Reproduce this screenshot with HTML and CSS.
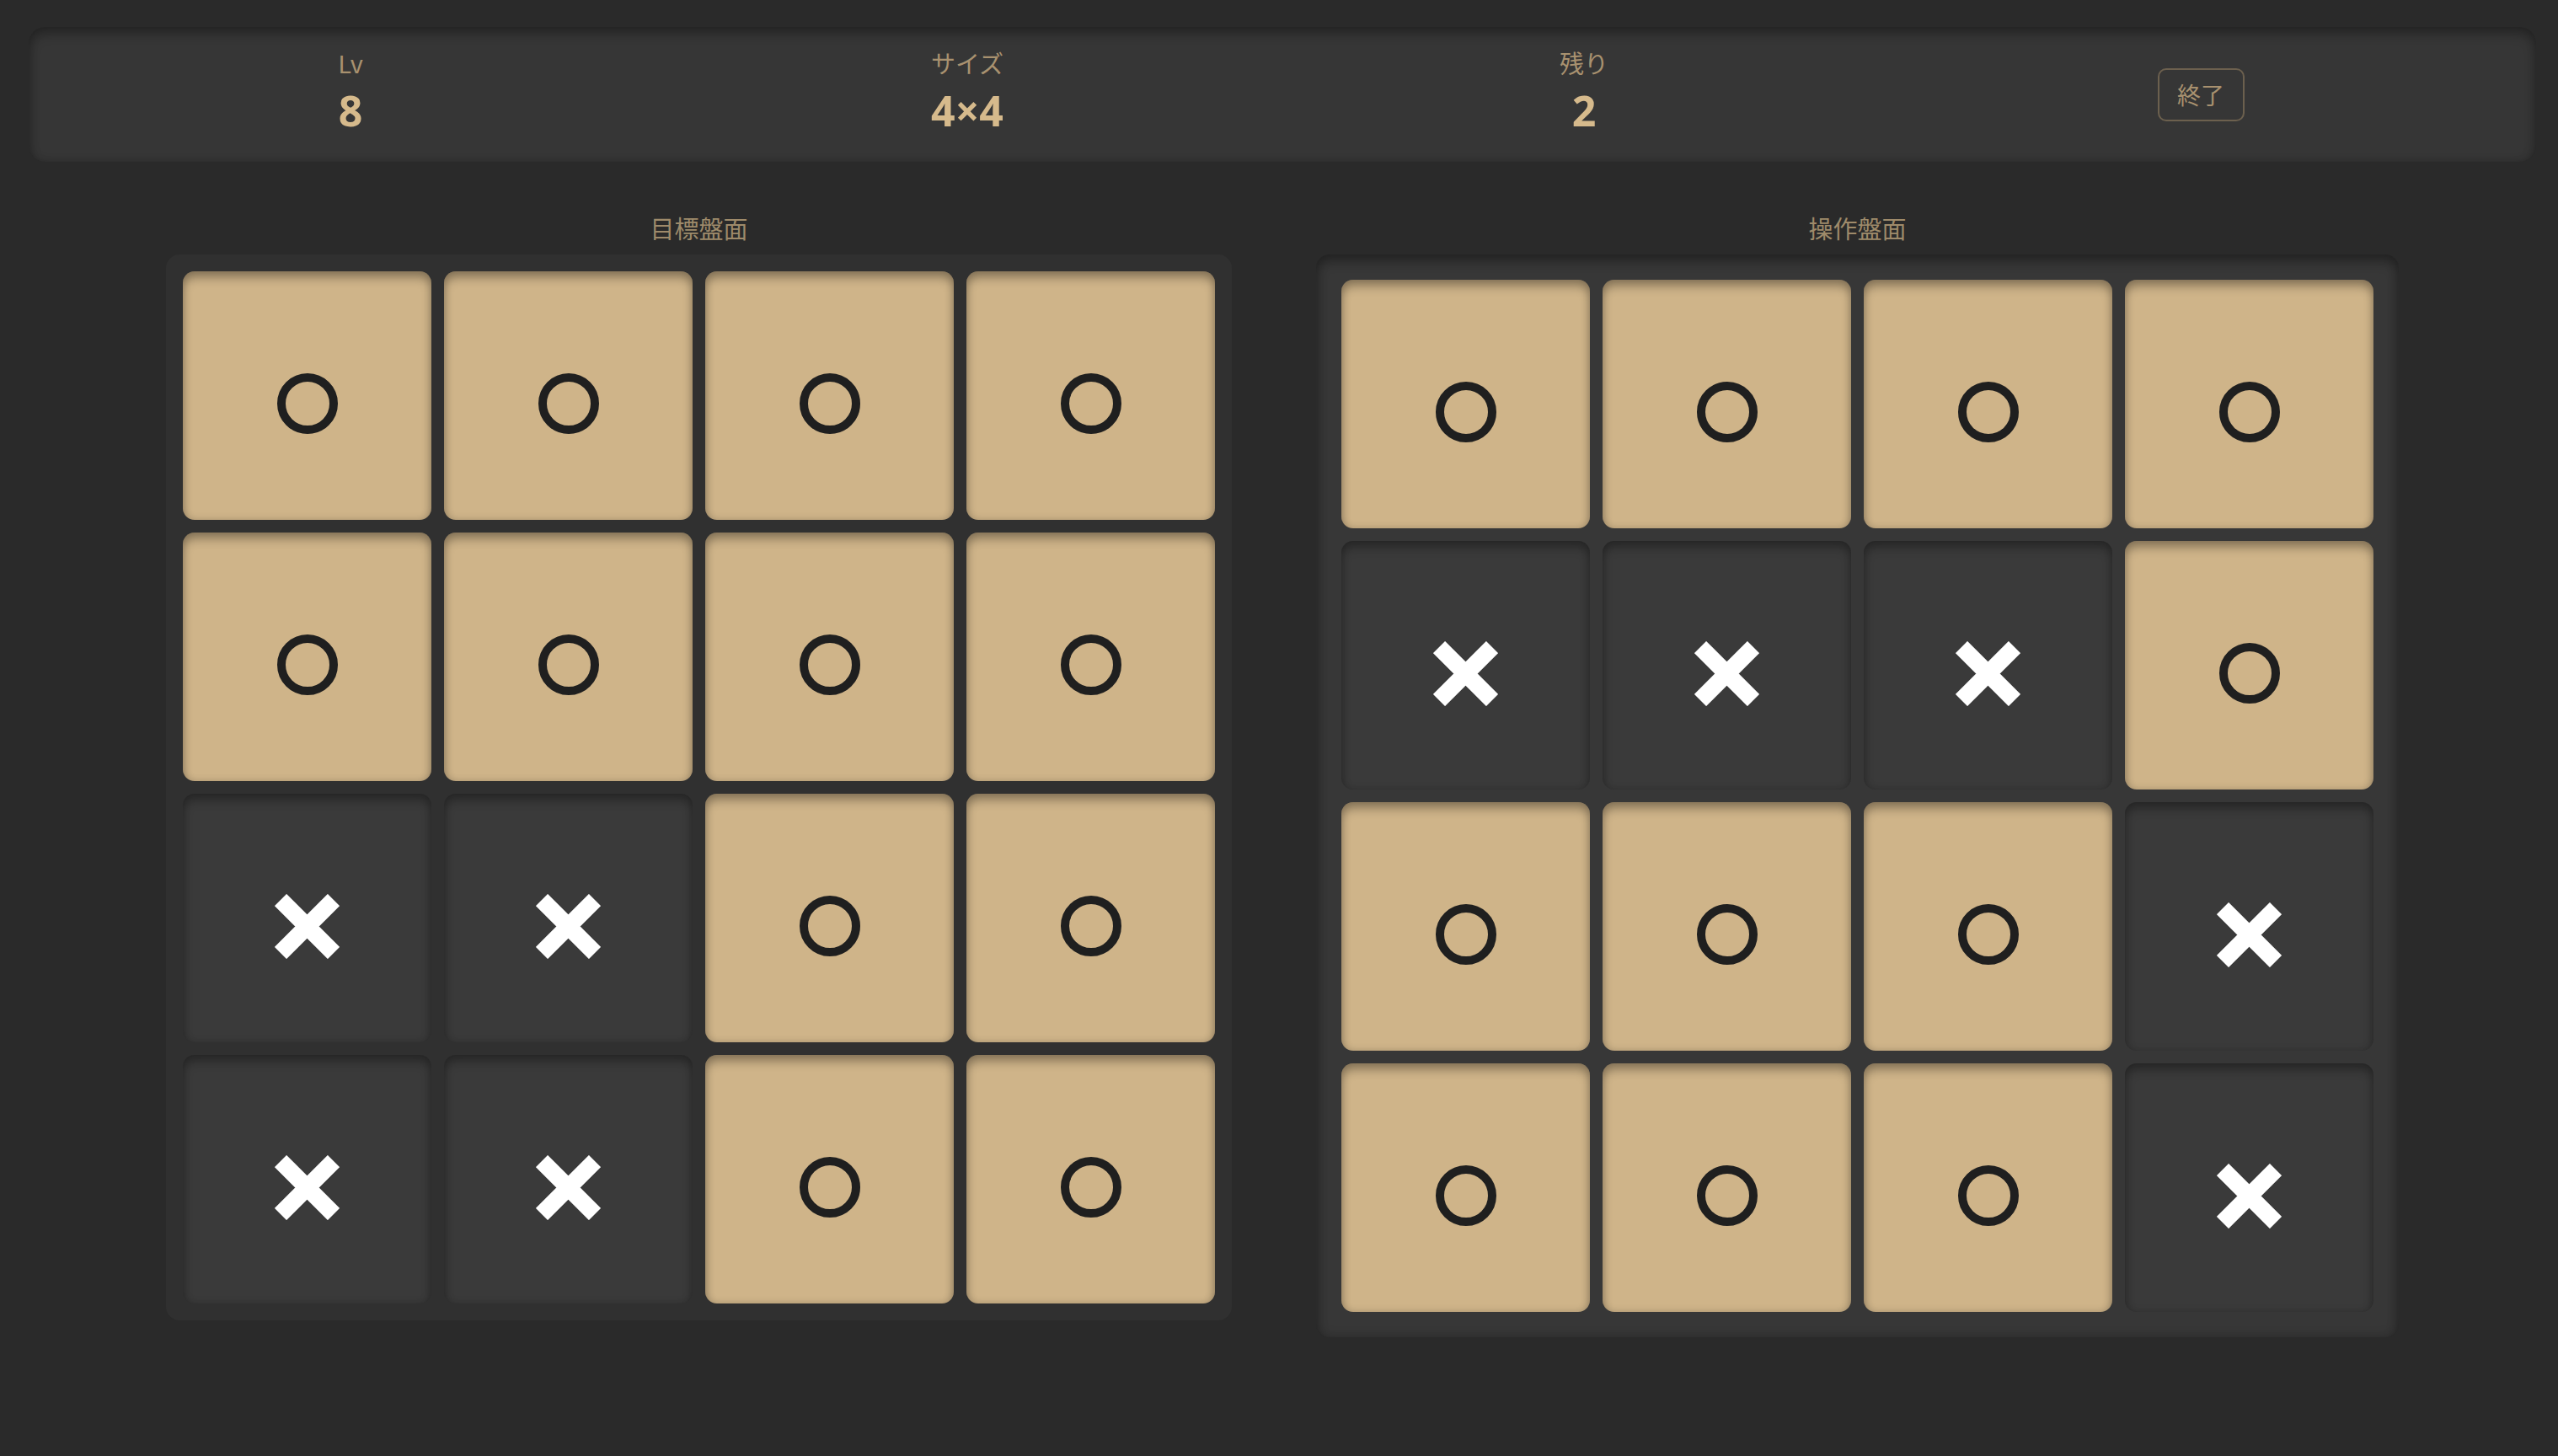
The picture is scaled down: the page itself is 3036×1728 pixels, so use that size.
FILE: index.html
```html
<!DOCTYPE html>
<html lang="ja">
<head>
<meta charset="utf-8">
<title>盤面</title>
<link rel="stylesheet" href="styles.css">
</head>
<body>
<header class="status">
  <div class="stat"><div class="stat-label">Lv</div><div class="stat-value">8</div></div>
  <div class="stat"><div class="stat-label">サイズ</div><div class="stat-value">4×4</div></div>
  <div class="stat"><div class="stat-label">残り</div><div class="stat-value">2</div></div>
  <div class="stat"><button class="quit">終了</button></div>
</header>
<main class="boards">
  <section class="board-col">
    <h2 class="board-title">目標盤面</h2>
    <div class="board board-target">
      <div class="cell on"><span class="ring"></span></div>
      <div class="cell on"><span class="ring"></span></div>
      <div class="cell on"><span class="ring"></span></div>
      <div class="cell on"><span class="ring"></span></div>
      <div class="cell on"><span class="ring"></span></div>
      <div class="cell on"><span class="ring"></span></div>
      <div class="cell on"><span class="ring"></span></div>
      <div class="cell on"><span class="ring"></span></div>
      <div class="cell off"><svg class="cross" viewBox="0 0 77 77"><path d="M7 7L70 70M70 7L7 70"/></svg></div>
      <div class="cell off"><svg class="cross" viewBox="0 0 77 77"><path d="M7 7L70 70M70 7L7 70"/></svg></div>
      <div class="cell on"><span class="ring"></span></div>
      <div class="cell on"><span class="ring"></span></div>
      <div class="cell off"><svg class="cross" viewBox="0 0 77 77"><path d="M7 7L70 70M70 7L7 70"/></svg></div>
      <div class="cell off"><svg class="cross" viewBox="0 0 77 77"><path d="M7 7L70 70M70 7L7 70"/></svg></div>
      <div class="cell on"><span class="ring"></span></div>
      <div class="cell on"><span class="ring"></span></div>
    </div>
  </section>
  <section class="board-col">
    <h2 class="board-title">操作盤面</h2>
    <div class="board board-play">
      <div class="cell on"><span class="ring"></span></div>
      <div class="cell on"><span class="ring"></span></div>
      <div class="cell on"><span class="ring"></span></div>
      <div class="cell on"><span class="ring"></span></div>
      <div class="cell off"><svg class="cross" viewBox="0 0 77 77"><path d="M7 7L70 70M70 7L7 70"/></svg></div>
      <div class="cell off"><svg class="cross" viewBox="0 0 77 77"><path d="M7 7L70 70M70 7L7 70"/></svg></div>
      <div class="cell off"><svg class="cross" viewBox="0 0 77 77"><path d="M7 7L70 70M70 7L7 70"/></svg></div>
      <div class="cell on"><span class="ring"></span></div>
      <div class="cell on"><span class="ring"></span></div>
      <div class="cell on"><span class="ring"></span></div>
      <div class="cell on"><span class="ring"></span></div>
      <div class="cell off"><svg class="cross" viewBox="0 0 77 77"><path d="M7 7L70 70M70 7L7 70"/></svg></div>
      <div class="cell on"><span class="ring"></span></div>
      <div class="cell on"><span class="ring"></span></div>
      <div class="cell on"><span class="ring"></span></div>
      <div class="cell off"><svg class="cross" viewBox="0 0 77 77"><path d="M7 7L70 70M70 7L7 70"/></svg></div>
    </div>
  </section>
</main>
</body>
</html>
```

FILE: styles.css
```css
html, body {
  margin: 0;
  height: 100%;
}
body {
  background: #2a2a2a;
  padding: 32px 0 0 8px;
  box-sizing: border-box;
  font-family: "Noto Sans CJK JP", "Noto Sans", sans-serif;
  overflow: hidden;
}
.status {
  margin: 0 26px;
  height: 160px;
  border-radius: 20px;
  background: #363636;
  box-shadow: inset 0 8px 14px rgba(0,0,0,0.28), inset 0 0 12px rgba(0,0,0,0.18);
  display: grid;
  grid-template-columns: repeat(4, 1fr);
  padding: 0 32px 0 16px;
  align-items: center;
}
.stat {
  display: flex;
  flex-direction: column;
  align-items: center;
  justify-content: center;
}
.stat-label {
  color: #a8916f;
  font-size: 29px;
  line-height: 34px;
  margin-top: -12px;
}
.stat-value {
  color: #d6ba8c;
  font-family: "Noto Sans", "Noto Sans CJK JP", sans-serif;
  font-size: 50px;
  font-weight: 700;
  line-height: 56px;
  margin-top: 12px;
  margin-bottom: -4px;
}
.quit {
  font-family: inherit;
  background: transparent;
  color: #a8916f;
  font-size: 28px;
  line-height: 40px;
  white-space: nowrap;
  border: 2px solid #6c604e;
  border-radius: 10px;
  padding: 0;
  width: 103px;
  height: 63px;
  box-sizing: border-box;
  display: flex;
  align-items: center;
  justify-content: center;
}
.boards {
  display: flex;
  justify-content: center;
  align-items: flex-start;
  gap: 100px;
  margin-top: 58px;
}
.board-col {
  display: flex;
  flex-direction: column;
  align-items: center;
}
.board-title {
  margin: 0 0 12px;
  font-size: 29px;
  font-weight: 400;
  line-height: 40px;
  color: #9e8a6a;
}
.board {
  display: grid;
  grid-template-columns: repeat(4, 295px);
  grid-auto-rows: 295px;
  gap: 15px;
  border-radius: 16px;
}
.board-target {
  padding: 20px;
  background: #303030;
}
.board-play {
  padding: 30px;
  background: #373737;
  box-shadow: inset 0 8px 14px rgba(0,0,0,0.3), inset 0 0 14px rgba(0,0,0,0.2);
}
.cell {
  border-radius: 14px;
  display: flex;
  align-items: center;
  justify-content: center;
}
.cell.on {
  background: #cfb489;
  box-shadow: inset 0 8px 12px rgba(0,0,0,0.3), inset 0 0 10px rgba(0,0,0,0.16);
}
.cell.off {
  background: #3a3a3a;
  box-shadow: inset 0 8px 12px rgba(0,0,0,0.28), inset 0 0 10px rgba(0,0,0,0.16);
}
.ring {
  width: 72px;
  height: 72px;
  box-sizing: border-box;
  border: 10px solid #1f1f1f;
  border-radius: 50%;
  margin-top: 18px;
}
.cross {
  width: 77px;
  height: 77px;
  margin-top: 20px;
}
.cross path {
  stroke: #ffffff;
  stroke-width: 20;
  stroke-linecap: butt;
  fill: none;
}
```
